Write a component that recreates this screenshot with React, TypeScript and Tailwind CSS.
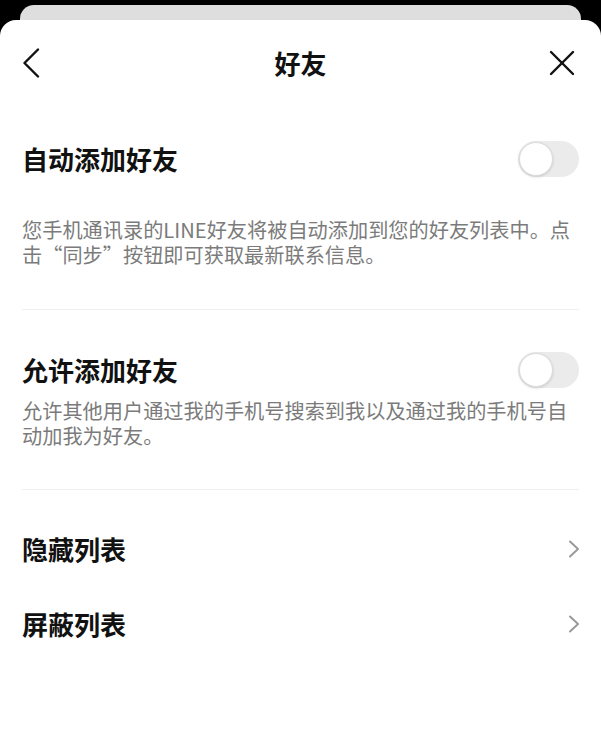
import React from "react";

const font = { fontFamily: '"Noto Sans CJK SC", "Noto Sans", sans-serif' };

function Toggle() {
  return (
    <div className="relative h-[36px] w-[61px] rounded-full bg-[#ebebeb]">
      <div className="absolute left-[1px] top-[1px] h-[34px] w-[34px] rounded-full border border-[#dcdcdc] bg-white shadow-[0_1px_3px_rgba(0,0,0,0.15)]" />
    </div>
  );
}

function Chevron() {
  return (
    <svg width="12" height="18" viewBox="0 0 12 18" fill="none" className="-mr-[1px]">
      <polyline points="2,1.5 10,9 2,16.5" stroke="#9a9a9a" strokeWidth="2" strokeLinecap="round" strokeLinejoin="round" />
    </svg>
  );
}

export default function App() {
  return (
    <div className="flex h-[754px] w-[601px] flex-col bg-black" style={font}>
      <div className="mx-[20px] mt-[5px] h-[20px] shrink-0 rounded-t-[14px] bg-[#dedede]" />
      <div className="-mt-[5px] flex flex-1 flex-col rounded-t-[16px] bg-white px-[22px]">
        {/* header */}
        <div className="grid h-[86px] grid-cols-[1fr_auto_1fr] items-center">
          <svg width="18" height="30" viewBox="0 0 18 30" fill="none">
            <polyline points="16,1.5 2.5,15 16,28.5" stroke="#111" strokeWidth="2.4" strokeLinecap="round" strokeLinejoin="round" />
          </svg>
          <div className="text-[26px] font-bold leading-none text-[#111]">好友</div>
          <svg width="26" height="26" viewBox="0 0 26 26" fill="none" className="mr-[4px] justify-self-end">
            <line x1="2" y1="2" x2="24" y2="24" stroke="#111" strokeWidth="2.4" strokeLinecap="round" />
            <line x1="24" y1="2" x2="2" y2="24" stroke="#111" strokeWidth="2.4" strokeLinecap="round" />
          </svg>
        </div>

        {/* auto add */}
        <div className="mt-[35px] flex h-[36px] items-center justify-between">
          <div className="text-[26px] font-bold leading-none text-[#111]">自动添加好友</div>
          <Toggle />
        </div>
        <p className="mt-[40px] text-[20.2px] leading-[25px] text-[#7b7b7b]">
          您手机通讯录的LINE好友将被自动添加到您的好友列表中。点击“同步”按钮即可获取最新联系信息。
        </p>
        <div className="mt-[42px] h-px bg-[#f0f0f0]" />

        {/* allow add */}
        <div className="mt-[42px] flex h-[36px] items-center justify-between">
          <div className="text-[26px] font-bold leading-none text-[#111]">允许添加好友</div>
          <Toggle />
        </div>
        <p className="mt-[10px] text-[20.2px] leading-[25px] text-[#7b7b7b]">
          允许其他用户通过我的手机号搜索到我以及通过我的手机号自动加我为好友。
        </p>
        <div className="mt-[41px] h-px bg-[#f0f0f0]" />

        {/* lists */}
        <div className="mt-[21px] flex flex-col">
          <div className="flex h-[75px] items-center justify-between">
            <div className="text-[26px] font-bold leading-none text-[#111]">隐藏列表</div>
            <Chevron />
          </div>
          <div className="flex h-[75px] items-center justify-between">
            <div className="text-[26px] font-bold leading-none text-[#111]">屏蔽列表</div>
            <Chevron />
          </div>
        </div>
      </div>
    </div>
  );
}
